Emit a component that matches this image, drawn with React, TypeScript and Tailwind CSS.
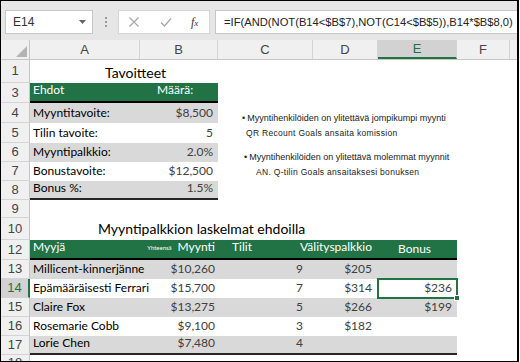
const goals = [
  { label: "Myyntitavoite:", value: "$8,500", gray: true, h: "h-[20px]", n: "4" },
  { label: "Tilin tavoite:", value: "5", gray: false, h: "h-[20px]", n: "5" },
  { label: "Myyntipalkkio:", value: "2.0%", gray: true, h: "h-[19px]", n: "6" },
  { label: "Bonustavoite:", value: "$12,500", gray: false, h: "h-[19px]", n: "7" },
  { label: "Bonus %:", value: "1.5%", gray: true, h: "h-[19px]", n: "8", last: true },
];

const sales = [
  { n: "13", name: "Millicent-kinnerjänne", sales: "$10,260", acc: "9", comm: "$205", bonus: "", gray: true },
  { n: "14", name: "Epämääräisesti Ferrari", sales: "$15,700", acc: "7", comm: "$314", bonus: "$236", gray: false, sel: true },
  { n: "15", name: "Claire Fox", sales: "$13,275", acc: "5", comm: "$266", bonus: "$199", gray: true },
  { n: "16", name: "Rosemarie Cobb", sales: "$9,100", acc: "3", comm: "$182", bonus: "", gray: false },
  { n: "17", name: "Lorie Chen", sales: "$7,480", acc: "4", comm: "", bonus: "", gray: true, last: true },
];

const columns = [
  { name: "A", w: "w-[110px]" },
  { name: "B", w: "w-[78px]" },
  { name: "C", w: "w-[95px]" },
  { name: "D", w: "w-[65px]" },
  { name: "E", w: "w-[79px]", sel: true },
  { name: "F", w: "w-[53px]" },
];

function RowHead({ n, selected }: { n: string; selected?: boolean }) {
  return (
    <div
      className={`w-[29px] shrink-0 flex items-center justify-center border-b border-b-[#d4d4d4] text-[13px] font-['Liberation_Sans',sans-serif] ${
        selected
          ? "bg-[#d2d2d2] text-[#217346] border-r-2 border-r-[#217346]"
          : "bg-[#f0f0f0] text-[#444] border-r border-r-[#c6c6c6]"
      }`}
    >
      {n}
    </div>
  );
}

function Row({ n, h, selected, children }: { n: string; h: string; selected?: boolean; children?: React.ReactNode }) {
  return (
    <div className={`flex shrink-0 ${h}`}>
      <RowHead n={n} selected={selected} />
      <div className="flex flex-1 min-w-0">{children}</div>
    </div>
  );
}

function Toolbar() {
  return (
    <div className="h-[39px] shrink-0 bg-[#e6e6e6] flex items-start pt-[9px] pl-[4px] font-['Liberation_Sans',sans-serif]">
      <div className="w-[88px] h-[24px] bg-white border border-[#c6c6c6] flex items-center pl-[7px] pr-[6px] text-[12px] text-[#333]">
        <span className="flex-1">E14</span>
        <svg width="7" height="4" viewBox="0 0 7 4">
          <path d="M0 0h7L3.5 4z" fill="#666" />
        </svg>
      </div>
      <div className="w-[25px] h-[24px] flex flex-col items-center justify-center gap-[2px]">
        <span className="w-[2px] h-[2px] bg-[#9a9a9a]" />
        <span className="w-[2px] h-[2px] bg-[#9a9a9a]" />
        <span className="w-[2px] h-[2px] bg-[#9a9a9a]" />
      </div>
      <div className="w-[92px] h-[24px] bg-white border border-[#d4d4d4] flex items-center pl-[9px]">
        <svg width="12" height="12" viewBox="0 0 12 12">
          <path d="M1.5 1.5l9 9M10.5 1.5l-9 9" stroke="#a6a6a6" strokeWidth="1.2" fill="none" />
        </svg>
        <svg className="ml-[20px]" width="12" height="12" viewBox="0 0 12 12">
          <path d="M1 6.5l3.5 3.5L11 2.5" stroke="#a6a6a6" strokeWidth="1.3" fill="none" />
        </svg>
        <span className="ml-[19px] text-[12px] italic text-[#333] font-['Liberation_Serif',serif]">
          f<span className="text-[9px]">x</span>
        </span>
      </div>
      <div className="ml-[5px] flex-1 h-[24px] bg-white border border-r-0 border-[#c6c6c6] flex items-center pl-[8px] text-[11.2px] text-[#222] whitespace-nowrap overflow-hidden">
        =IF(AND(NOT(B14&lt;$B$7),NOT(C14&lt;$B$5)),B14*$B$8,0)
      </div>
    </div>
  );
}

function ColHeaders() {
  return (
    <div className="flex h-[20px] shrink-0 bg-[#f0f0f0] border-b border-[#c6c6c6] font-['Liberation_Sans',sans-serif] text-[13px]">
      <div className="w-[29px] shrink-0 relative border-r border-[#c6c6c6]">
        <svg className="absolute right-[2px] bottom-[2px]" width="11" height="11" viewBox="0 0 11 11">
          <path d="M11 0V11H0z" fill="#b4b4b4" />
        </svg>
      </div>
      {columns.map((c) => (
        <div
          key={c.name}
          className={`${c.w} shrink-0 flex items-center justify-center border-r border-[#d4d4d4] ${
            c.sel ? "bg-[#d2d2d2] text-[#217346] border-b-2 border-b-[#217346]" : "text-[#444]"
          }`}
        >
          {c.name}
        </div>
      ))}
      <div className="flex-1" />
    </div>
  );
}

export default function App() {
  return (
    <div className="w-[520px] h-[362px] bg-white overflow-hidden font-['Lato',sans-serif]">
      <div className="relative w-[519px] h-[362px] border-t border-l border-b border-r-2 border-black flex flex-col overflow-hidden">
        <Toolbar />
        <ColHeaders />

        <Row n="1" h="h-[23px]">
          <div className="w-[188px] flex items-center pl-[75px] pt-[2px] text-[14px] text-black">Tavoitteet</div>
        </Row>

        <Row n="3" h="h-[20px]">
          <div className="w-[188px] flex bg-[#217346] border-b-2 border-black text-white text-[12px]">
            <div className="w-[110px] flex items-end pb-[2px] pl-[3px]">Ehdot</div>
            <div className="w-[78px] flex items-end pb-[2px] pl-[17px]">Määrä:</div>
          </div>
        </Row>

        {goals.map((g) => (
          <Row key={g.n} n={g.n} h={g.h}>
            <div
              className={`w-[188px] flex text-[12px] ${g.gray ? "bg-[#d9d9d9]" : ""} ${
                g.last ? "border-b-2 border-[#262626]" : ""
              }`}
            >
              <div className="w-[110px] flex items-end pb-[1px] pl-[3px] text-black">{g.label}</div>
              <div className="w-[78px] flex items-end justify-end pb-[1px] pr-[5px] text-[#404040]">{g.value}</div>
            </div>
          </Row>
        ))}

        <Row n="9" h="h-[18px]" />

        <Row n="10" h="h-[22px]">
          <div className="flex items-end pb-[1px] pl-[68px] text-[14px] text-black whitespace-nowrap">
            Myyntipalkkion laskelmat ehdoilla
          </div>
        </Row>

        <Row n="12" h="h-[20px]">
          <div className="w-[427px] flex bg-[#217346] border-b-2 border-black text-white text-[12px] whitespace-nowrap">
            <div className="w-[110px] shrink-0 flex items-end pb-[2px] pl-[3px]">Myyjä</div>
            <div className="w-[78px] shrink-0 flex items-end justify-end pb-[2px] pr-[3px]">
              <span className="text-[6px] self-start mt-[3px] mr-[6px]">Yhteensä</span>
              Myynti
            </div>
            <div className="w-[95px] shrink-0 flex items-end pb-[2px] pl-[14px]">Tilit</div>
            <div className="w-[65px] shrink-0 flex items-end justify-end pb-[2px] pr-[6px]">Välityspalkkio</div>
            <div className="w-[79px] shrink-0 flex items-end pb-[0px] pl-[20px]">Bonus</div>
          </div>
        </Row>

        {sales.map((s) => (
          <Row key={s.n} n={s.n} h="h-[19px]" selected={s.sel}>
            <div
              className={`w-[427px] flex text-[12px] whitespace-nowrap ${s.gray ? "bg-[#d9d9d9]" : ""} ${
                s.last ? "border-b-2 border-[#262626]" : ""
              }`}
            >
              <div className="w-[110px] shrink-0 flex items-end pb-[1px] pl-[3px] text-black">{s.name}</div>
              <div className="w-[78px] shrink-0 flex items-end justify-end pb-[1px] pr-[3px] text-[#404040]">{s.sales}</div>
              <div className="w-[95px] shrink-0 flex items-end justify-end pb-[1px] pr-[10px] text-[#404040]">{s.acc}</div>
              <div className="w-[65px] shrink-0 flex items-end justify-end pb-[1px] pr-[6px] text-[#404040]">{s.comm}</div>
              <div className="w-[79px] shrink-0 relative flex items-end justify-end pb-[1px] pr-[5px] text-[#404040]">
                {s.bonus}
                {s.sel && (
                  <div className="absolute -left-[1px] -top-[1px] w-[81px] h-[21px] border-2 border-[#217346]">
                    <div className="absolute -right-[4px] -bottom-[4px] w-[6px] h-[6px] bg-[#217346] border border-white" />
                  </div>
                )}
              </div>
            </div>
          </Row>
        ))}

        <div className="flex shrink-0 flex-1">
          <div className="w-[29px] shrink-0 flex justify-center pt-[1px] leading-[13px] bg-[#f0f0f0] border-r border-[#c6c6c6] text-[13px] text-[#444] font-['Liberation_Sans',sans-serif] overflow-hidden">
            18
          </div>
        </div>

        <div className="absolute left-[241px] top-[110px] text-[9px] leading-[15px] text-[#222] font-['Liberation_Sans',sans-serif] whitespace-nowrap">
          <div>
            <span className="mr-[2px]">•</span>Myyntihenkilöiden on ylitettävä jompikumpi myynti
          </div>
          <div className="ml-[4px] text-[8.5px] tracking-[0.3px]">QR Recount Goals ansaita komission</div>
        </div>
        <div className="absolute left-[243px] top-[149px] text-[9px] leading-[15px] text-[#222] font-['Liberation_Sans',sans-serif] whitespace-nowrap">
          <div>
            <span className="mr-[2px]">•</span>Myyntihenkilöiden on ylitettävä molemmat myynnit
          </div>
          <div className="ml-[12px] text-[8.5px] tracking-[0.3px]">AN. Q-tilin Goals ansaitaksesi bonuksen</div>
        </div>
      </div>
    </div>
  );
}
